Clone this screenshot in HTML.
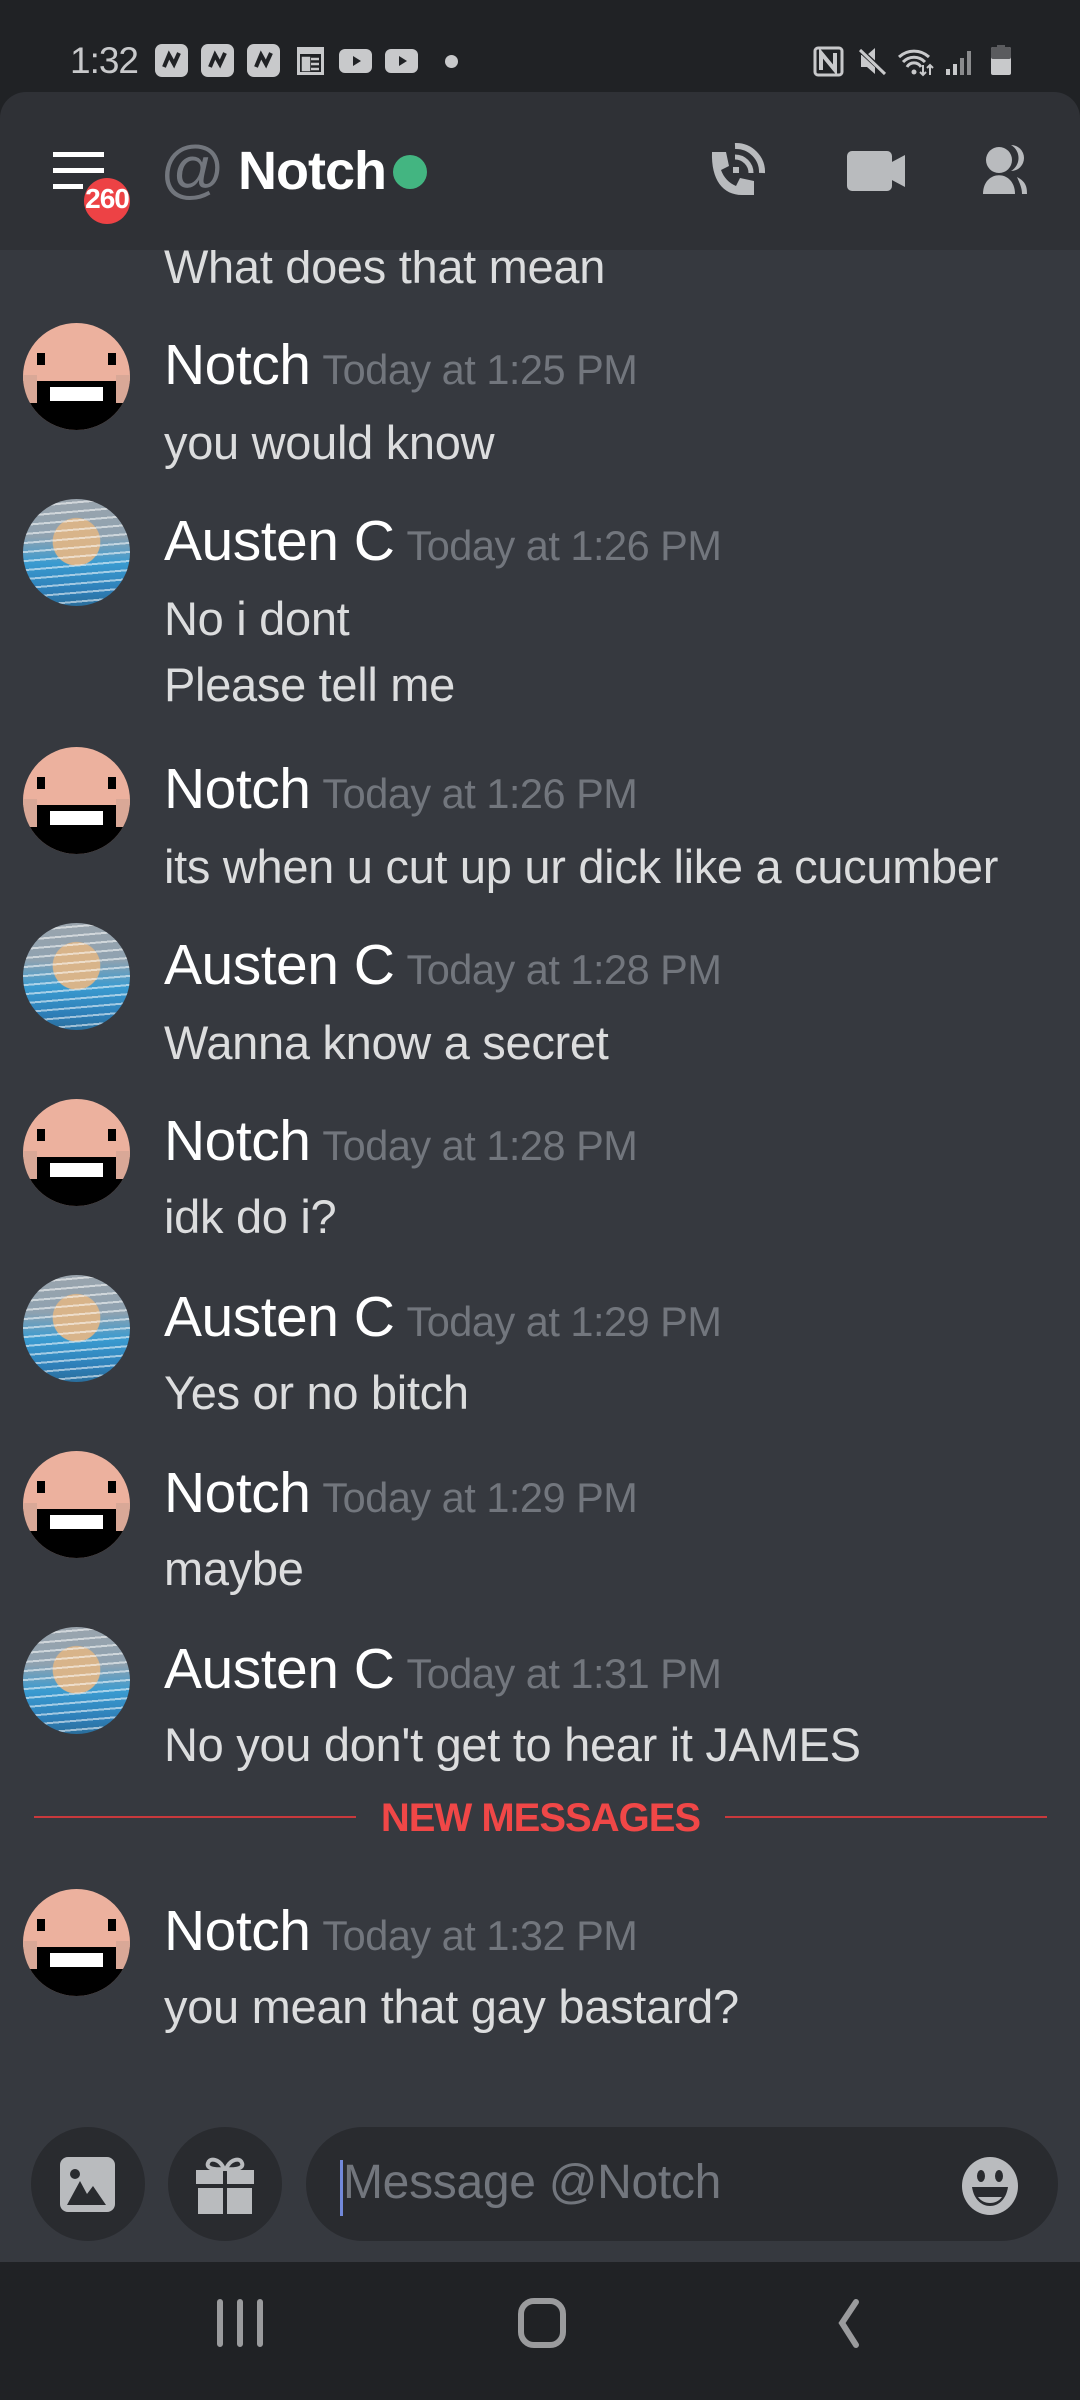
<!DOCTYPE html>
<html><head><meta charset="utf-8"><style>
*{margin:0;padding:0;box-sizing:border-box}
body{width:1080px;height:2400px;background:#202225;position:relative;overflow:hidden;font-family:"Liberation Sans",sans-serif}
.abs{position:absolute}
.chat{position:absolute;left:0;top:240px;width:1080px;height:2022px;background:#36393f}
.hdr{position:absolute;left:0;top:92px;width:1080px;height:158px;background:#2f3136;border-radius:26px 26px 0 0}
.name{position:absolute;left:164px;color:#fff;font-size:57px;white-space:nowrap;letter-spacing:-0.5px;margin-top:2px}
.name span{color:#72767d;font-size:41.5px;margin-left:12px;letter-spacing:-0.5px}
.txt{position:absolute;left:164px;color:#dcddde;font-size:47px;white-space:nowrap;letter-spacing:-0.3px;margin-top:3px}
.av{position:absolute;left:23px;width:107px;height:107px;border-radius:50%;overflow:hidden}
.notch{background:#ecb19e}
.notch i{position:absolute;display:block}
.ham{background:radial-gradient(circle at 50% 40%,#d8b48a 0 28%,transparent 29%),linear-gradient(180deg,#9aa4ad 0%,#8fa2b0 35%,#3a9bd0 60%,#2e7fb8 85%,#2a6e9c 100%);}
.ham::after{content:"";position:absolute;inset:0;background:repeating-linear-gradient(175deg,transparent 0 7px,rgba(255,255,255,.55) 7px 9px)}
.sb{position:absolute;background:#c8c9cb;border-radius:7px}
</style></head><body>

<div class="abs" style="left:70px;top:40px;color:#c8c9cb;font-size:37px;letter-spacing:-1px">1:32</div>
<div class="sb" style="left:155px;top:44px;width:33px;height:33px"></div>
<div class="sb" style="left:201px;top:44px;width:33px;height:33px"></div>
<div class="sb" style="left:247px;top:44px;width:33px;height:33px"></div>
<svg class="abs" style="left:155px;top:44px" width="130" height="33"><path d="M9 23 L14 11 L19 20 L24 9" stroke="#202225" stroke-width="4" fill="none"/><path d="M55 23 L60 11 L65 20 L70 9" stroke="#202225" stroke-width="4" fill="none"/><path d="M101 23 L106 11 L111 20 L116 9" stroke="#202225" stroke-width="4" fill="none"/></svg>
<svg class="abs" style="left:297px;top:47px" width="28" height="28"><rect x="1.5" y="1.5" width="24" height="25" fill="none" stroke="#c8c9cb" stroke-width="3"/><rect x="1" y="1" width="26" height="6" fill="#c8c9cb"/><path d="M6 11h6v12H6zM14 12h8M14 17h8M14 22h8" stroke="#c8c9cb" stroke-width="2.5" fill="#c8c9cb"/></svg>
<div class="sb" style="left:339px;top:49px;width:33px;height:24px;border-radius:6px"></div>
<div class="sb" style="left:385px;top:49px;width:33px;height:24px;border-radius:6px"></div>
<svg class="abs" style="left:339px;top:49px" width="80" height="24"><path d="M14 7v10l8-5z M60 7v10l8-5z" fill="#202225"/></svg>
<div class="abs" style="left:445px;top:55px;width:13px;height:13px;border-radius:50%;background:#c8c9cb"></div>
<svg class="abs" style="left:812px;top:45px" width="205" height="32">
<rect x="3" y="3" width="27" height="27" rx="3" fill="none" stroke="#c8c9cb" stroke-width="3"/><path d="M9 25V8l14 17V8" stroke="#c8c9cb" stroke-width="4" fill="none"/>
<path d="M49 10h6l8-7v26l-8-7h-6z" fill="#c8c9cb"/><path d="M48 5l26 24" stroke="#202225" stroke-width="5"/><path d="M48 5l25 24" stroke="#c8c9cb" stroke-width="3"/>
<path d="M87 12a22 22 0 0 1 30 0M91 17a15 15 0 0 1 22 0M95 22a8 8 0 0 1 14 0" stroke="#c8c9cb" stroke-width="3" fill="none"/><circle cx="102" cy="27" r="2.5" fill="#c8c9cb"/><path d="M111 20v10M108 27l3 3 3-3M118 30v-10M115 23l3-3 3 3" stroke="#c8c9cb" stroke-width="2" fill="none"/>
<rect x="134" y="24" width="4" height="6" fill="#c8c9cb"/><rect x="141" y="19" width="4" height="11" fill="#c8c9cb"/><rect x="148" y="13" width="4" height="17" fill="#8a8b8d"/><rect x="155" y="6" width="4" height="24" fill="#8a8b8d"/>
<rect x="179" y="2" width="20" height="28" rx="2" fill="#c8c9cb"/><rect x="179" y="2" width="20" height="12" rx="2" fill="#5a5b5e"/><rect x="185" y="0" width="8" height="3" fill="#5a5b5e"/>
</svg>

<div class="chat"></div>

<div class="txt" style="top:236px">What does that mean</div>

<div class="av notch" style="top:323px"><i style="left:14px;top:30px;width:8px;height:12px;background:#000"></i><i style="left:85px;top:30px;width:8px;height:12px;background:#000"></i><i style="left:0;top:58px;width:107px;height:60px;background:#000"></i><i style="left:0;top:52px;width:14px;height:28px;background:#d9a897"></i><i style="left:93px;top:52px;width:14px;height:28px;background:#d9a897"></i><i style="left:27px;top:64px;width:53px;height:14px;background:#fff"></i></div>
<div class="name" style="top:330px">Notch<span>Today at 1:25 PM</span></div>
<div class="txt" style="top:412px">you would know</div>

<div class="av ham" style="top:499px"></div>
<div class="name" style="top:506px">Austen C<span>Today at 1:26 PM</span></div>
<div class="txt" style="top:588px">No i dont</div>
<div class="txt" style="top:654px">Please tell me</div>

<div class="av notch" style="top:747px"><i style="left:14px;top:30px;width:8px;height:12px;background:#000"></i><i style="left:85px;top:30px;width:8px;height:12px;background:#000"></i><i style="left:0;top:58px;width:107px;height:60px;background:#000"></i><i style="left:0;top:52px;width:14px;height:28px;background:#d9a897"></i><i style="left:93px;top:52px;width:14px;height:28px;background:#d9a897"></i><i style="left:27px;top:64px;width:53px;height:14px;background:#fff"></i></div>
<div class="name" style="top:754px">Notch<span>Today at 1:26 PM</span></div>
<div class="txt" style="top:836px">its when u cut up ur dick like a cucumber</div>

<div class="av ham" style="top:923px"></div>
<div class="name" style="top:930px">Austen C<span>Today at 1:28 PM</span></div>
<div class="txt" style="top:1012px">Wanna know a secret</div>

<div class="av notch" style="top:1099px"><i style="left:14px;top:30px;width:8px;height:12px;background:#000"></i><i style="left:85px;top:30px;width:8px;height:12px;background:#000"></i><i style="left:0;top:58px;width:107px;height:60px;background:#000"></i><i style="left:0;top:52px;width:14px;height:28px;background:#d9a897"></i><i style="left:93px;top:52px;width:14px;height:28px;background:#d9a897"></i><i style="left:27px;top:64px;width:53px;height:14px;background:#fff"></i></div>
<div class="name" style="top:1106px">Notch<span>Today at 1:28 PM</span></div>
<div class="txt" style="top:1186px">idk do i?</div>

<div class="av ham" style="top:1275px"></div>
<div class="name" style="top:1282px">Austen C<span>Today at 1:29 PM</span></div>
<div class="txt" style="top:1362px">Yes or no bitch</div>

<div class="av notch" style="top:1451px"><i style="left:14px;top:30px;width:8px;height:12px;background:#000"></i><i style="left:85px;top:30px;width:8px;height:12px;background:#000"></i><i style="left:0;top:58px;width:107px;height:60px;background:#000"></i><i style="left:0;top:52px;width:14px;height:28px;background:#d9a897"></i><i style="left:93px;top:52px;width:14px;height:28px;background:#d9a897"></i><i style="left:27px;top:64px;width:53px;height:14px;background:#fff"></i></div>
<div class="name" style="top:1458px">Notch<span>Today at 1:29 PM</span></div>
<div class="txt" style="top:1538px">maybe</div>

<div class="av ham" style="top:1627px"></div>
<div class="name" style="top:1634px">Austen C<span>Today at 1:31 PM</span></div>
<div class="txt" style="top:1714px">No you don't get to hear it JAMES</div>

<div class="abs" style="left:34px;top:1816px;width:322px;height:2px;background:#c9393c"></div>
<div class="abs" style="left:725px;top:1816px;width:322px;height:2px;background:#c9393c"></div>
<div class="abs" style="left:356px;top:1796px;width:369px;text-align:center;color:#f04747;font-size:40px;font-weight:bold;letter-spacing:-1px">NEW MESSAGES</div>

<div class="av notch" style="top:1889px"><i style="left:14px;top:30px;width:8px;height:12px;background:#000"></i><i style="left:85px;top:30px;width:8px;height:12px;background:#000"></i><i style="left:0;top:58px;width:107px;height:60px;background:#000"></i><i style="left:0;top:52px;width:14px;height:28px;background:#d9a897"></i><i style="left:93px;top:52px;width:14px;height:28px;background:#d9a897"></i><i style="left:27px;top:64px;width:53px;height:14px;background:#fff"></i></div>
<div class="name" style="top:1896px">Notch<span>Today at 1:32 PM</span></div>
<div class="txt" style="top:1976px">you mean that gay bastard?</div>

<div class="hdr"></div>
<svg class="abs" style="left:50px;top:150px" width="60" height="42"><rect x="3" y="2" width="51" height="5" fill="#fff"/><rect x="3" y="18" width="51" height="5" fill="#fff"/><rect x="3" y="34" width="30" height="5" fill="#fff"/></svg>
<div class="abs" style="left:84px;top:178px;width:46px;height:46px;border-radius:50%;background:#ed4245"></div>
<div class="abs" style="left:80px;top:183px;width:54px;text-align:center;color:#fff;font-weight:bold;font-size:28px;letter-spacing:-1px">260</div>
<div class="abs" style="left:160px;top:132px;color:#72767d;font-size:64px">@</div>
<div class="abs" style="left:238px;top:140px;color:#fff;font-size:54px;font-weight:bold;letter-spacing:-1px">Notch</div>
<div class="abs" style="left:393px;top:155px;width:34px;height:34px;border-radius:50%;background:#43b581"></div>
<svg class="abs" style="left:705px;top:140px" width="360" height="65" fill="#b9bbbe">
<path d="M7 12h14l3 14-8 4c3 8 8 13 15 16l4-8 14 3v14h-12C18 55 6 40 7 12z"/>
<path d="M30 6a26 26 0 0 1 27 27" stroke="#b9bbbe" stroke-width="6" fill="none"/><path d="M30 17a16 16 0 0 1 16 16" stroke="#b9bbbe" stroke-width="5" fill="none"/><rect x="28" y="27" width="6" height="6"/>
<rect x="142" y="11" width="45" height="40" rx="5"/><path d="M185 23l15-8v32l-15-8z"/>
<circle cx="294" cy="20" r="13"/><path d="M278 54c0-25 32-25 32 0z"/><path d="M306 5a15 15 0 0 1 0 26 12 12 0 0 0 0-26zM312 37c10 5 10 12 10 17h-5c0-6-2-10-5-17z"/>
</svg>

<div class="abs" style="left:31px;top:2127px;width:114px;height:114px;border-radius:50%;background:#292b2f"></div>
<svg class="abs" style="left:58px;top:2155px" width="60" height="58"><rect x="2" y="2" width="55" height="55" rx="8" fill="#b9bbbe"/><circle cx="17" cy="19" r="5" fill="#292b2f"/><path d="M9 50l13-24 7 13 6-8 13 19z" fill="#292b2f"/></svg>
<div class="abs" style="left:168px;top:2127px;width:114px;height:114px;border-radius:50%;background:#292b2f"></div>
<svg class="abs" style="left:194px;top:2155px" width="62" height="60" fill="#b9bbbe"><path d="M30 14c-4-10-14-12-16-6-2 5 5 7 16 6zM32 14c4-10 14-12 16-6 2 5-5 7-16 6z" stroke="#b9bbbe" stroke-width="4" fill="none"/><rect x="2" y="15" width="27" height="14"/><rect x="33" y="15" width="27" height="14"/><rect x="4" y="33" width="25" height="26"/><rect x="33" y="33" width="25" height="26"/></svg>
<div class="abs" style="left:306px;top:2127px;width:752px;height:114px;border-radius:57px;background:#292b2f"></div>
<div class="abs" style="left:340px;top:2160px;width:3px;height:56px;background:#7289da"></div>
<div class="abs" style="left:343px;top:2155px;color:#72767d;font-size:48px;letter-spacing:-0.3px">Message @Notch</div>
<svg class="abs" style="left:960px;top:2155px" width="60" height="62"><ellipse cx="30" cy="31" rx="28" ry="29" fill="#b9bbbe"/><ellipse cx="21" cy="21" rx="4" ry="6" fill="#292b2f"/><ellipse cx="39" cy="21" rx="4" ry="6" fill="#292b2f"/><path d="M12 32h36c-2 13-10 19-18 19s-16-6-18-19z" fill="#292b2f"/><path d="M18 42h24c-3 4-7 6-12 6s-9-2-12-6z" fill="#b9bbbe"/></svg>

<div class="abs" style="left:0;top:2262px;width:1080px;height:138px;background:#202225"></div>
<svg class="abs" style="left:200px;top:2290px" width="700" height="80" stroke="#9a9b9d" fill="none" stroke-width="6" stroke-linecap="round">
<path d="M20 12v42M40 12v42M60 12v42"/>
<rect x="321" y="11" width="42" height="44" rx="13"/>
<path d="M656 12l-14 21 14 22"/>
</svg>
</body></html>
